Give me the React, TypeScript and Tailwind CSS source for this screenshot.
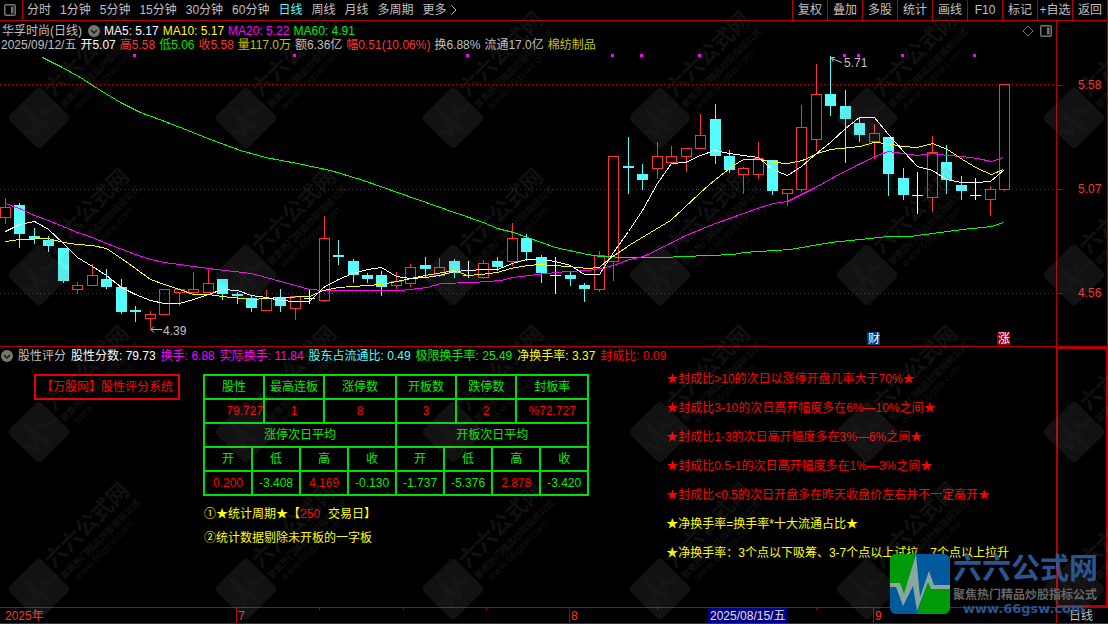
import React from 'react';

type Candle = [number, number, number, number, 'up' | 'down' | 'flat'];

const periods = ['分时', '1分钟', '5分钟', '15分钟', '30分钟', '60分钟', '日线', '周线', '月线', '多周期'];
const tools = ['复权', '叠加', '多股', '统计', '画线', 'F10', '标记', '+自选', '返回'];

const averages = [
  { text: 'MA5: 5.17', color: 'text-white' },
  { text: 'MA10: 5.17', color: 'text-[#ffff00]' },
  { text: 'MA20: 5.22', color: 'text-[#ff00ff]' },
  { text: 'MA60: 4.91', color: 'text-[#00f000]' },
];

const quote = [
  { text: '2025/09/12/五', color: 'text-[#c0c0c0]' },
  { text: '开5.07', color: 'text-white' },
  { text: '高5.58', color: 'text-[#ff3232]' },
  { text: '低5.06', color: 'text-[#00e600]' },
  { text: '收5.58', color: 'text-[#ff3232]' },
  { text: '量117.0万', color: 'text-[#c0c000]' },
  { text: '额6.36亿', color: 'text-[#c0c0c0]' },
  { text: '幅0.51(10.06%)', color: 'text-[#ff3232]' },
  { text: '换6.88%', color: 'text-[#c0c0c0]' },
  { text: '流通17.0亿', color: 'text-[#c0c0c0]' },
  { text: '棉纺制品', color: 'text-[#c0c000]' },
];

const scores = [
  { text: '股性分数: 79.73', color: 'text-white' },
  { text: '换手: 6.88', color: 'text-[#ff00ff]' },
  { text: '实际换手: 11.84', color: 'text-[#ff00ff]' },
  { text: '股东占流通比: 0.49', color: 'text-[#54fcfc]' },
  { text: '极限换手率: 25.49', color: 'text-[#00f000]' },
  { text: '净换手率: 3.37', color: 'text-[#ffff00]' },
  { text: '封成比: 0.09', color: 'text-[#ff0000]' },
];

// wick top, wick bottom, body top, body bottom
const candles: Candle[] = [
  [198, 223, 207, 217, 'up'], [203, 247, 205, 233, 'down'], [228, 243, 236, 238, 'down'],
  [236, 251, 240, 245, 'down'], [248, 282, 248, 280, 'down'], [282, 293, 285, 289, 'up'],
  [264, 285, 275, 285, 'up'], [269, 288, 279, 286, 'down'], [279, 313, 287, 311, 'down'],
  [306, 321, 310, 311, 'down'], [311, 328, 314, 318, 'up'], [289, 314, 289, 314, 'up'],
  [288, 305, 289, 292, 'up'], [272, 294, 289, 292, 'up'], [270, 292, 283, 292, 'up'],
  [279, 299, 279, 293, 'down'], [292, 303, 294, 295, 'down'], [296, 311, 298, 307, 'down'],
  [290, 310, 298, 310, 'up'], [289, 311, 297, 305, 'down'], [296, 319, 296, 308, 'up'],
  [289, 303, 298, 298, 'flat'], [216, 301, 238, 300, 'up'], [240, 264, 255, 256, 'down'],
  [259, 282, 261, 274, 'down'], [273, 282, 275, 278, 'down'], [271, 295, 275, 286, 'down'],
  [272, 288, 281, 285, 'up'], [264, 286, 267, 283, 'up'], [257, 276, 265, 268, 'down'],
  [258, 276, 267, 275, 'up'], [259, 277, 261, 272, 'down'], [261, 277, 275, 275, 'flat'],
  [260, 278, 263, 277, 'up'], [257, 270, 261, 266, 'down'], [223, 265, 238, 261, 'up'],
  [234, 260, 238, 251, 'down'], [255, 282, 257, 272, 'down'], [257, 293, 275, 275, 'flat'],
  [271, 285, 275, 278, 'down'], [283, 301, 285, 288, 'down'], [251, 291, 255, 289, 'up'],
  [156, 280, 156, 261, 'up'], [137, 193, 166, 167, 'down'], [164, 189, 174, 179, 'down'],
  [142, 178, 156, 168, 'up'], [146, 162, 156, 162, 'up'], [148, 171, 148, 156, 'up'],
  [114, 148, 135, 148, 'up'], [104, 163, 119, 155, 'down'], [150, 172, 156, 169, 'down'],
  [167, 193, 168, 174, 'up'], [142, 178, 158, 174, 'up'], [160, 194, 160, 190, 'down'],
  [189, 205, 189, 193, 'up'], [105, 191, 127, 189, 'up'], [64, 150, 94, 139, 'up'],
  [56, 115, 94, 105, 'down'], [90, 162, 106, 118, 'down'], [117, 141, 123, 134, 'down'],
  [124, 158, 133, 141, 'up'], [137, 195, 137, 173, 'down'], [168, 199, 178, 194, 'down'],
  [172, 213, 195, 195, 'flat'], [136, 211, 152, 197, 'up'], [145, 193, 162, 179, 'down'],
  [176, 199, 185, 190, 'down'], [178, 199, 195, 195, 'flat'], [186, 215, 189, 199, 'up'],
  [84, 190, 84, 189, 'up'],
];

const lines = [
  {
    color: '#00ff00',
    points:
      '42,57 60,66 80,77 100,90 120,102 140,112 159,119 185,129 210,139 240,150 265,157 297,163 330,170 350,176 363,180 380,186 454,212 483,222 497,228 513,232 527,237 555,247 587,254 600,256 629,257 663,257 683,256 733,254 743,252 790,249 830,242 860,239 887,236 910,236 932,233 962,229 991,226 1003,222',
  },
  {
    color: '#ff00ff',
    points:
      '5,203 19,208 34,215 48,220 77,232 92,237 106,243 135,254 150,259 164,262 208,268 251,273 295,285 309,289 323,290 400,290 427,287 440,283 473,282 500,280 513,277 537,274 567,271 587,270 600,268 613,265 629,259 643,256 670,243 683,236 715,223 743,213 760,207 773,203 787,201 813,188 833,177 860,163 875,156 888,151 903,153 917,155 932,153 947,155 962,156 977,158 991,161 1003,157',
  },
  {
    color: '#ffff00',
    points:
      '5,241 19,239 48,238 63,242 77,244 92,245 106,248 121,258 135,268 150,279 164,284 179,289 193,294 208,294 222,296 251,299 280,297 309,296 323,290 338,287 381,284 396,281 425,275 454,270 467,275 480,274 497,272 510,268 527,265 540,264 567,266 587,268 599,267 608,259 630,244 670,220 683,208 700,192 715,179 733,165 743,159 760,159 773,162 787,163 802,160 817,153 830,149 860,146 873,142 887,143 902,146 917,147 932,143 947,149 962,159 977,168 991,174 1003,169',
  },
  {
    color: '#ffffff',
    points:
      '5,231 19,224 34,221 48,229 63,243 77,257 92,266 106,275 121,287 135,294 150,300 164,303 179,303 193,299 208,294 222,289 237,290 251,295 266,297 280,300 295,301 309,301 323,287 338,279 352,273 367,269 381,267 396,276 410,278 425,277 439,275 454,271 468,270 483,269 497,269 512,263 526,259 541,259 555,261 570,265 584,274 599,274 613,252 628,231 642,210 657,183 671,163 685,162 700,155 714,150 729,153 743,155 758,157 772,169 787,175 801,166 816,153 830,142 845,128 859,117 874,117 888,134 903,151 917,166 932,170 946,179 961,182 975,182 990,181 1004,169',
  },
];

const signals = [134, 294, 467, 612, 641, 699, 844, 858, 902, 974];
const prices = ['5.58', '5.07', '4.56'];

const summary = [
  { label: '股性', value: '79.727', span: 5, align: 'text-right' },
  { label: '最高连板', value: '1', span: 5, align: 'text-center' },
  { label: '涨停数', value: '8', span: 6, align: 'text-center' },
  { label: '开板数', value: '3', span: 5, align: 'text-center' },
  { label: '跌停数', value: '2', span: 5, align: 'text-center' },
  { label: '封板率', value: '%72.727', span: 6, align: 'text-center' },
];

const nextDay = [
  { label: '开', value: '0.200' },
  { label: '低', value: '-3.408' },
  { label: '高', value: '4.169' },
  { label: '收', value: '-0.130' },
  { label: '开', value: '-1.737' },
  { label: '低', value: '-5.376' },
  { label: '高', value: '2.878' },
  { label: '收', value: '-3.420' },
];

const notes = [
  { text: '★封成比>10的次日以涨停开盘几率大于70%★', color: 'text-[#ff0000]' },
  { text: '★封成比3-10的次日高开幅度多在6%—10%之间★', color: 'text-[#ff0000]' },
  { text: '★封成比1-3的次日高开幅度多在3%—6%之间★', color: 'text-[#ff0000]' },
  { text: '★封成比0.5-1的次日高开幅度多在1%—3%之间★', color: 'text-[#ff0000]' },
  { text: '★封成比<0.5的次日开盘多在昨天收盘价左右并不一定高开★', color: 'text-[#ff0000]' },
  { text: '★净换手率=换手率*十大流通占比★', color: 'text-[#ffff00]' },
  { text: '★净换手率：3个点以下吸筹、3-7个点以上试拉，7个点以上拉升', color: 'text-[#ffff00]' },
];

const cell = 'h-6 border-2 border-[#00e000] p-0 font-normal leading-5';

function PanelIcon({ className }: { className: string }) {
  return (
    <svg viewBox="0 0 12 12" className={className} fill="none">
      <rect x="0.75" y="0.75" width="10.5" height="10.5" rx="1.5" stroke="currentColor" strokeWidth="1.5" />
      <rect x="7" y="2.5" width="2.5" height="7" fill="currentColor" />
    </svg>
  );
}

function CollapseButton({ label }: { label: string }) {
  return (
    <button aria-label={label} className="flex size-3 shrink-0 items-center justify-center rounded-full bg-[#76766c]">
      <svg viewBox="0 0 12 12" className="size-3" fill="none" stroke="#181818" strokeWidth="1.5">
        <path d="M3 5l3 3 3-3" />
      </svg>
    </button>
  );
}

// Brand mark: origin is the middle of the square
function Brand({ tinted }: { tinted?: boolean }) {
  const green = tinted ? '#009a08' : '#808080';
  const blue = tinted ? '#005a9c' : '#808080';
  const pulse = tinted ? '#98aea6' : '#e0e0e0';
  const name = tinted ? '#2b5490' : '#707070';
  return (
    <g>
      <rect x="-30" y="-30" width="60" height="60" rx="6" fill={blue} />
      <path d="M-24 -30H-5L-11 0L-17 12L-22 1H-30V-24A6 6 0 0 1 -24 -30Z" fill={green} />
      <path d="M30 3V24A6 6 0 0 1 24 30H-3L3 11L9 -5L13 3Z" fill={green} />
      <path
        d="M-30 -1H-20L-16 10L-4 -30L0 13L9 -13L14 1H30V5H11L8 -2L-3 27L-7 2L-17 22L-24 3H-30Z"
        fill={pulse}
        fillOpacity={tinted ? 0.9 : 0.25}
      />
      <text x="33" y="-5" fontSize="29" fontWeight="700" fill={name} className="font-['Noto_Sans_CJK_SC',sans-serif]">
        六六公式网
      </text>
      <text x="33" y="15" fontSize="12" fontWeight="700" fill={tinted ? '#666666' : '#707070'} className="font-['Noto_Sans_CJK_SC',sans-serif]">
        聚焦热门精品炒股指标公式
      </text>
      <text x="43" y="29" fontSize="13" fontWeight={tinted ? 700 : 400} fill={name} className="font-['DejaVu_Sans',sans-serif]">
        www.66gsw.com
      </text>
    </g>
  );
}

function Toolbar() {
  return (
    <header className="flex h-[21px] items-stretch border-b border-[#b40000] text-[#c0c0c0]">
      <button aria-label="侧栏" className="flex w-[23px] items-center border-r border-[#b40000] pl-1 text-[#76766c]">
        <PanelIcon className="size-3" />
      </button>
      <nav className="flex items-center gap-[9px] pl-1">
        {periods.map((name) => (
          <button key={name} className={name === '日线' ? 'text-[#54fcfc]' : ''}>
            {name}
          </button>
        ))}
        <button className="flex items-center gap-1">
          更多
          <svg viewBox="0 0 6 10" className="h-2.5 w-1.5" fill="none" stroke="currentColor">
            <path d="M0.5 0.5L5 5L0.5 9.5" />
          </svg>
        </button>
      </nav>
      <div className="ml-auto flex border-r border-[#b40000]">
        {tools.map((name) => (
          <button key={name} className="w-[35px] border-l border-[#b40000] text-center whitespace-nowrap">
            {name}
          </button>
        ))}
      </div>
    </header>
  );
}

function CandleShape({ candle, x }: { candle: Candle; x: number }) {
  const [high, low, top, bottom, kind] = candle;
  if (kind === 'up') {
    return (
      <g fill="#ff3232">
        <rect x={x} y={high} width="1" height={top - high} />
        <rect x={x} y={bottom} width="1" height={low - bottom + 1} />
        <rect x={x - 4.5} y={top + 0.5} width="10" height={bottom - top} fill="none" stroke="#ff3232" />
      </g>
    );
  }
  return (
    <g fill={kind === 'flat' ? '#ffffff' : '#54fcfc'}>
      <rect x={x} y={high} width="1" height={low - high + 1} />
      <rect x={x - 5} y={top} width="11" height={bottom - top + 1} />
    </g>
  );
}

function Chart() {
  return (
    <svg viewBox="0 51 1056 295" className="block h-auto w-full" role="img" aria-label="日线K线图">
      <g shapeRendering="crispEdges">
        {[84, 189, 293].map((y) => (
          <line key={y} x1="0" x2="1056" y1={y + 0.5} y2={y + 0.5} stroke="#c00000" strokeDasharray="1 3" />
        ))}
        {signals.map((x) => (
          <rect key={x} x={x - 1} y="54" width="3" height="3" fill="#ff00ff" />
        ))}
        {candles.map((candle, i) => (
          <CandleShape key={i} candle={candle} x={Math.round(5 + i * 14.48)} />
        ))}
        {lines.map((line) => (
          <polyline key={line.color} points={line.points} fill="none" stroke={line.color} transform="translate(0.5 0.5)" />
        ))}
      </g>
      <g fill="none" stroke="#c0c0c0">
        <path d="M842 62.5L831.5 58.5M835 57.5H831.5L833 61.5" />
        <path d="M162 329.5H151M154 326.5L151 329.5L154 332.5" />
      </g>
      <g fill="#c0c0c0" fontSize="12">
        <text x="844" y="67">5.71</text>
        <text x="163" y="335">4.39</text>
      </g>
      <rect x="867" y="332" width="13" height="13" fill="#003a78" />
      <rect x="997" y="332" width="13" height="13" fill="#960000" />
      <g fill="#ffffff" fontSize="12">
        <text x="868" y="343">财</text>
        <text x="998" y="343">涨</text>
      </g>
    </svg>
  );
}

function ScoreTable() {
  return (
    <table className="w-[386px] table-fixed border-collapse text-center text-[#00f000]">
      <colgroup>
        {Array.from({ length: 32 }, (_, i) => (
          <col key={i} className="w-3" />
        ))}
      </colgroup>
      <tbody>
        <tr>
          {summary.map((item) => (
            <th key={item.label} colSpan={item.span} className={cell}>
              {item.label}
            </th>
          ))}
        </tr>
        <tr className="text-[#ff0000]">
          {summary.map((item) => (
            <td key={item.label} colSpan={item.span} className={`${cell} ${item.align}`}>
              {item.value}
            </td>
          ))}
        </tr>
        <tr>
          <th colSpan={16} className={cell}>涨停次日平均</th>
          <th colSpan={16} className={cell}>开板次日平均</th>
        </tr>
        <tr>
          {nextDay.map((item, i) => (
            <th key={i} colSpan={4} className={cell}>
              {item.label}
            </th>
          ))}
        </tr>
        <tr>
          {nextDay.map((item, i) => (
            <td key={i} colSpan={4} className={`${cell} ${item.value.startsWith('-') ? '' : 'text-[#ff0000]'}`}>
              {item.value}
            </td>
          ))}
        </tr>
      </tbody>
    </table>
  );
}

function DateAxis() {
  return (
    <svg viewBox="0 608 1056 15" className="block h-auto w-full" role="img" aria-label="日期轴">
      <g fill="#b40000" shapeRendering="crispEdges">
        {[236, 569, 873].map((x) => (
          <rect key={x} x={x} y="608" width="1" height="15" />
        ))}
        {[319, 403, 486, 657, 743, 816].map((x) => (
          <rect key={x} x={x} y="608" width="1" height="2" />
        ))}
      </g>
      <g fill="#ff3232" fontSize="12">
        <text x="5" y="620">2025年</text>
        <text x="238" y="620">7</text>
        <text x="571" y="620">8</text>
        <text x="875" y="620">9</text>
      </g>
      <rect x="708" y="608" width="79" height="15" fill="#000080" />
      <text x="710" y="620" fontSize="12" fill="#e0e0e0">
        2025/08/15/五
      </text>
    </svg>
  );
}

export default function App() {
  return (
    <div className="relative flex min-h-screen flex-col overflow-hidden bg-black font-['Liberation_Sans','Noto_Sans_CJK_SC',sans-serif] text-xs text-[#c0c0c0]">
      <Toolbar />

      {/* K线主图 */}
      <section className="flex border-b border-[#b40000]">
        <div className="min-w-0 flex-1 pt-[3px]">
          <div className="flex h-3.5 items-center gap-1 pl-0.5 leading-3.5 whitespace-nowrap">
            <h1>华孚时尚(日线)</h1>
            <div className="pl-0.5">
              <CollapseButton label="收起主图" />
            </div>
            {averages.map((item) => (
              <span key={item.text} className={item.color}>
                {item.text}
              </span>
            ))}
            <div className="ml-auto flex items-center gap-1.5 pr-1 text-[#76766c]">
              <button aria-label="标记点">
                <svg viewBox="0 0 12 12" className="block size-3" fill="none" stroke="currentColor">
                  <path d="M6 1L11 6L6 11L1 6Z" />
                </svg>
              </button>
              <button aria-label="切换面板">
                <PanelIcon className="block size-3" />
              </button>
            </div>
          </div>
          <div className="flex h-[13px] items-center gap-1 pl-px leading-3.5 whitespace-nowrap">
            {quote.map((item) => (
              <span key={item.text} className={item.color}>
                {item.text}
              </span>
            ))}
          </div>
          <Chart />
        </div>
        <aside className="flex w-[52px] flex-col gap-[88px] border-x border-[#b40000] pt-14 text-[#ff3232]">
          {prices.map((price) => (
            <div key={price} className="flex items-center gap-4 leading-4">
              <span className="h-px w-[5px] bg-[#b40000]" />
              {price}
            </div>
          ))}
        </aside>
      </section>

      {/* 股性评分副图 */}
      <section className="flex flex-1">
        <div className="min-w-0 flex-1 pt-0.5">
          <div className="flex h-3.5 items-center gap-1.25 pl-px leading-3.5 whitespace-nowrap">
            <CollapseButton label="收起副图" />
            <h2>股性评分</h2>
            {scores.map((item) => (
              <span key={item.text} className={item.color}>
                {item.text}
              </span>
            ))}
          </div>
          <div className="flex items-start pt-px whitespace-nowrap">
            <div className="mt-2.5 ml-[34px] border-2 border-[#e60000] px-[5px] py-0.5 leading-[18px] text-[#ff0000]">
              【万股网】股性评分系统
            </div>
            <div className="mt-2.5 ml-[23px]">
              <ScoreTable />
              <div className="pt-1.5 pl-px leading-6 text-[#ffff00]">
                <p>
                  ①★统计周期★【<span className="pr-2 text-[#ff0000]">250</span>交易日】
                </p>
                <p>②统计数据剔除未开板的一字板</p>
              </div>
            </div>
            <div className="ml-[77px] pt-px leading-[29px]">
              {notes.map((note) => (
                <p key={note.text} className={note.color}>
                  {note.text}
                </p>
              ))}
            </div>
          </div>
        </div>
        <aside className="w-[52px] border-2 border-[#b40000]" />
      </section>

      <footer className="flex border-y border-[#b40000]">
        <div className="min-w-0 flex-1">
          <DateAxis />
        </div>
        <div className="flex w-[52px] items-center border-l border-[#b40000] pl-3 leading-3.5">日线</div>
      </footer>

      {/* 水印 */}
      <svg className="pointer-events-none absolute inset-0 size-full" aria-hidden="true">
        <defs>
          <pattern id="mark" width="207" height="157" patternUnits="userSpaceOnUse">
            <g transform="translate(39 118) rotate(-45) scale(0.75)" opacity="0.14">
              <Brand />
            </g>
          </pattern>
        </defs>
        <rect width="100%" height="100%" fill="url(#mark)" />
      </svg>
      <svg viewBox="-30 -42 210 78" className="pointer-events-none absolute right-2 bottom-1 h-[78px] w-[210px]" aria-label="六六公式网">
        <Brand tinted />
      </svg>
    </div>
  );
}
